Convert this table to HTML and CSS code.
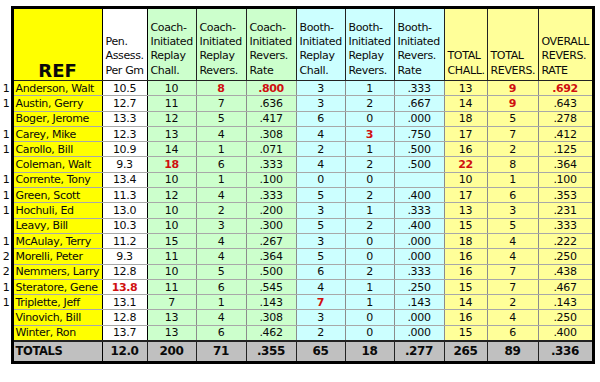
FILE: index.html
```html
<!DOCTYPE html>
<html>
<head>
<meta charset="utf-8">
<link rel="stylesheet" href="styles.css">
</head>
<body>
<table class="sheet">
  <colgroup>
    <col class="c-lab"><col class="c-name"><col class="c-pen"><col class="c-cc"><col class="c-cr"><col class="c-crate"><col class="c-bc"><col class="c-br"><col class="c-brate"><col class="c-tc"><col class="c-tr"><col class="c-ov">
  </colgroup>
  <thead>
    <tr class="head">
      <th class="lab"></th>
      <th class="name ref">REF</th>
      <th class="pen">Pen.<br>Assess.<br>Per Gm</th>
      <th class="coach">Coach-<br>Initiated<br>Replay<br>Chall.</th>
      <th class="coach">Coach-<br>Initiated<br>Replay<br>Revers.</th>
      <th class="coach">Coach-<br>Initiated<br>Revers.<br>Rate</th>
      <th class="booth">Booth-<br>Initiated<br>Replay<br>Chall.</th>
      <th class="booth">Booth-<br>Initiated<br>Replay<br>Revers.</th>
      <th class="booth">Booth-<br>Initiated<br>Revers.<br>Rate</th>
      <th class="tot">TOTAL<br>CHALL.</th>
      <th class="tot">TOTAL<br>REVERS.</th>
      <th class="tot last">OVERALL<br>REVERS.<br>RATE</th>
    </tr>
  </thead>
  <tbody>
    <tr><td class="lab">1</td><td class="name">Anderson, Walt</td><td class="pen">10.5</td><td class="coach">10</td><td class="coach"><b class="red">8</b></td><td class="coach"><b class="red">.800</b></td><td class="booth">3</td><td class="booth">1</td><td class="booth">.333</td><td class="tot">13</td><td class="tot"><b class="red">9</b></td><td class="tot last"><b class="red">.692</b></td></tr>
    <tr><td class="lab">1</td><td class="name">Austin, Gerry</td><td class="pen">12.7</td><td class="coach">11</td><td class="coach">7</td><td class="coach">.636</td><td class="booth">3</td><td class="booth">2</td><td class="booth">.667</td><td class="tot">14</td><td class="tot"><b class="red">9</b></td><td class="tot last">.643</td></tr>
    <tr><td class="lab"></td><td class="name">Boger, Jerome</td><td class="pen">13.3</td><td class="coach">12</td><td class="coach">5</td><td class="coach">.417</td><td class="booth">6</td><td class="booth">0</td><td class="booth">.000</td><td class="tot">18</td><td class="tot">5</td><td class="tot last">.278</td></tr>
    <tr><td class="lab">1</td><td class="name">Carey, Mike</td><td class="pen">12.3</td><td class="coach">13</td><td class="coach">4</td><td class="coach">.308</td><td class="booth">4</td><td class="booth"><b class="red">3</b></td><td class="booth">.750</td><td class="tot">17</td><td class="tot">7</td><td class="tot last">.412</td></tr>
    <tr><td class="lab">1</td><td class="name">Carollo, Bill</td><td class="pen">10.9</td><td class="coach">14</td><td class="coach">1</td><td class="coach">.071</td><td class="booth">2</td><td class="booth">1</td><td class="booth">.500</td><td class="tot">16</td><td class="tot">2</td><td class="tot last">.125</td></tr>
    <tr><td class="lab"></td><td class="name">Coleman, Walt</td><td class="pen">9.3</td><td class="coach"><b class="red">18</b></td><td class="coach">6</td><td class="coach">.333</td><td class="booth">4</td><td class="booth">2</td><td class="booth">.500</td><td class="tot"><b class="red">22</b></td><td class="tot">8</td><td class="tot last">.364</td></tr>
    <tr><td class="lab">1</td><td class="name">Corrente, Tony</td><td class="pen">13.4</td><td class="coach">10</td><td class="coach">1</td><td class="coach">.100</td><td class="booth">0</td><td class="booth">0</td><td class="booth"></td><td class="tot">10</td><td class="tot">1</td><td class="tot last">.100</td></tr>
    <tr><td class="lab">1</td><td class="name">Green, Scott</td><td class="pen">11.3</td><td class="coach">12</td><td class="coach">4</td><td class="coach">.333</td><td class="booth">5</td><td class="booth">2</td><td class="booth">.400</td><td class="tot">17</td><td class="tot">6</td><td class="tot last">.353</td></tr>
    <tr><td class="lab">1</td><td class="name">Hochuli, Ed</td><td class="pen">13.0</td><td class="coach">10</td><td class="coach">2</td><td class="coach">.200</td><td class="booth">3</td><td class="booth">1</td><td class="booth">.333</td><td class="tot">13</td><td class="tot">3</td><td class="tot last">.231</td></tr>
    <tr><td class="lab"></td><td class="name">Leavy, Bill</td><td class="pen">10.3</td><td class="coach">10</td><td class="coach">3</td><td class="coach">.300</td><td class="booth">5</td><td class="booth">2</td><td class="booth">.400</td><td class="tot">15</td><td class="tot">5</td><td class="tot last">.333</td></tr>
    <tr><td class="lab">1</td><td class="name">McAulay, Terry</td><td class="pen">11.2</td><td class="coach">15</td><td class="coach">4</td><td class="coach">.267</td><td class="booth">3</td><td class="booth">0</td><td class="booth">.000</td><td class="tot">18</td><td class="tot">4</td><td class="tot last">.222</td></tr>
    <tr><td class="lab">2</td><td class="name">Morelli, Peter</td><td class="pen">9.3</td><td class="coach">11</td><td class="coach">4</td><td class="coach">.364</td><td class="booth">5</td><td class="booth">0</td><td class="booth">.000</td><td class="tot">16</td><td class="tot">4</td><td class="tot last">.250</td></tr>
    <tr><td class="lab">2</td><td class="name">Nemmers, Larry</td><td class="pen">12.8</td><td class="coach">10</td><td class="coach">5</td><td class="coach">.500</td><td class="booth">6</td><td class="booth">2</td><td class="booth">.333</td><td class="tot">16</td><td class="tot">7</td><td class="tot last">.438</td></tr>
    <tr><td class="lab">1</td><td class="name">Steratore, Gene</td><td class="pen"><b class="red">13.8</b></td><td class="coach">11</td><td class="coach">6</td><td class="coach">.545</td><td class="booth">4</td><td class="booth">1</td><td class="booth">.250</td><td class="tot">15</td><td class="tot">7</td><td class="tot last">.467</td></tr>
    <tr><td class="lab">1</td><td class="name">Triplette, Jeff</td><td class="pen">13.1</td><td class="coach">7</td><td class="coach">1</td><td class="coach">.143</td><td class="booth"><b class="red">7</b></td><td class="booth">1</td><td class="booth">.143</td><td class="tot">14</td><td class="tot">2</td><td class="tot last">.143</td></tr>
    <tr><td class="lab"></td><td class="name">Vinovich, Bill</td><td class="pen">12.8</td><td class="coach">13</td><td class="coach">4</td><td class="coach">.308</td><td class="booth">3</td><td class="booth">0</td><td class="booth">.000</td><td class="tot">16</td><td class="tot">4</td><td class="tot last">.250</td></tr>
    <tr><td class="lab"></td><td class="name">Winter, Ron</td><td class="pen">13.7</td><td class="coach">13</td><td class="coach">6</td><td class="coach">.462</td><td class="booth">2</td><td class="booth">0</td><td class="booth">.000</td><td class="tot">15</td><td class="tot">6</td><td class="tot last">.400</td></tr>
  </tbody>
  <tfoot>
    <tr class="totals">
      <td class="lab"></td><td class="name">TOTALS</td><td>12.0</td><td>200</td><td>71</td><td>.355</td><td>65</td><td>18</td><td>.277</td><td>265</td><td>89</td><td class="last">.336</td>
    </tr>
  </tfoot>
</table>
</body>
</html>
```

FILE: styles.css
```css
html, body {
  margin: 0;
  padding: 0;
  background: #ffffff;
}
body {
  padding-top: 6px;
  font-family: "DejaVu Sans", sans-serif;
  font-size: 11px;
  letter-spacing: -0.35px;
  color: #0a0a0a;
}
.sheet {
  border-collapse: collapse;
  table-layout: fixed;
  width: 593px;
}
.c-lab { width: 12px; }
.c-name { width: 90px; }
.c-pen { width: 45px; }
.c-cc { width: 49px; }
.c-cr { width: 50px; }
.c-crate { width: 50px; }
.c-bc { width: 49px; }
.c-br { width: 49px; }
.c-brate { width: 50px; }
.c-tc { width: 43px; }
.c-tr { width: 51px; }
.c-ov { width: 55px; }

td, th {
  padding: 0;
  overflow: hidden;
  white-space: nowrap;
}
.lab {
  border: none;
  text-align: right;
  padding-right: 1px;
  background: #fff;
}
tbody tr {
  height: 15.3px;
}
tbody td {
  height: 14.2px;
  line-height: 13px;
  text-align: center;
  border-top: 1px solid #a8a8a8;
  border-bottom: 1px solid #a8a8a8;
  border-left: 1px solid #8c8c8c;
  border-right: 1px solid #8c8c8c;
}
tbody td.lab {
  border: none;
}
.head th {
  height: 69px;
  vertical-align: bottom;
  text-align: left;
  font-weight: normal;
  line-height: 14.3px;
  padding: 0 0 2px 3px;
  border: 1px solid #222;
  border-top: 3px solid #000;
}
.head th.lab {
  border: none;
}
.name {
  background: #ffff00;
  border-left: 3px solid #000 !important;
  border-right: 1px solid #000 !important;
}
tbody .name {
  text-align: left;
  padding-left: 2px;
}
.pen {
  background: #ffffff;
  border-right: 1px solid #000 !important;
}
.coach { background: #ccffcc; }
.booth { background: #ccffff; }
.tot { background: #ffff99; }
.last { border-right: 3px solid #000 !important; }
.head th.tot { border-left: 1px solid #000; }
.head th.ref {
  font-weight: bold;
  font-size: 18px;
  letter-spacing: 0;
  text-align: center;
  padding: 0 0 2px 0;
}
.red {
  color: #d01010;
  font-weight: bold;
}
.totals td {
  height: 19px;
  background: #c0c0c0;
  font-weight: bold;
  font-size: 12px;
  text-align: center;
  border-top: 2px solid #222;
  border-bottom: 3px solid #000;
  border-left: 1px solid #222;
  border-right: 1px solid #222;
}
.totals td.lab {
  border: none;
  background: #fff;
}
.totals td.name {
  text-align: left;
  padding-left: 2px;
  background: #c0c0c0;
  font-size: 11.5px;
}
```
